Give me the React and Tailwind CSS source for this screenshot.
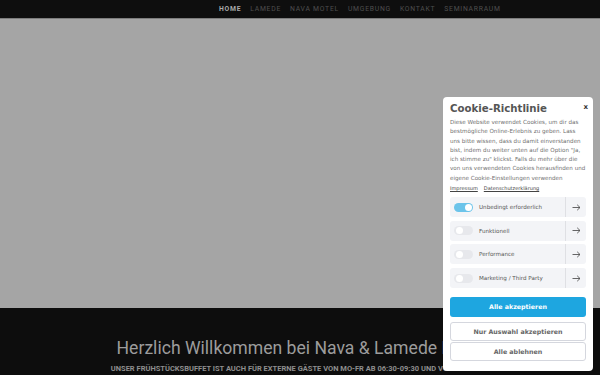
import React from 'react';

const navItems = ['HOME', 'LAMEDE', 'NAVA MOTEL', 'UMGEBUNG', 'KONTAKT', 'SEMINARRAUM'];

const categories = [
    { label: 'Unbedingt erforderlich', on: true },
    { label: 'Funktionell', on: false },
    { label: 'Performance', on: false },
    { label: 'Marketing / Third Party', on: false },
];

const Arrow = () => (
    <svg width="9" height="7" viewBox="0 0 9 7" fill="none" stroke="#555" strokeWidth="0.9">
        <path d="M0.5 3.5H8M5.2 0.8L8 3.5L5.2 6.2" />
    </svg>
);

const CookieBox = () => (
    <div className="absolute left-[443px] top-[97px] w-[150px] h-[274px] bg-white rounded-[4px] px-[7px] pt-[4px] font-['DejaVu_Sans',sans-serif]">
        <div className="flex items-start justify-between">
            <h2 className="text-[10.2px] leading-[16px] font-bold text-[#555]">Cookie-Richtlinie</h2>
            <span className="text-[7px] leading-[10px] font-bold text-[#333] mr-[-2px] mt-[1px]">x</span>
        </div>
        <p className="mt-[1px] text-[5.6px] leading-[9.3px] text-[#6f6f6f]">
            Diese Website verwendet Cookies, um dir das bestmögliche Online-Erlebnis zu geben. Lass uns bitte wissen, dass du damit einverstanden bist, indem du weiter unten auf die Option "Ja, ich stimme zu" klickst. Falls du mehr über die von uns verwendeten Cookies herausfinden und eigene Cookie-Einstellungen verwenden
        </p>
        <div className="mt-[1px] flex gap-[6px] text-[5px] leading-[8px] text-[#444] underline">
            <span>Impressum</span>
            <span>Datenschutzerklärung</span>
        </div>
        <div className="mt-[5px] flex flex-col gap-[3.7px]">
            {categories.map((c) => (
                <div key={c.label} className="h-[20px] bg-[#f3f4f7] rounded-[3px] flex items-center">
                    <div className="flex-1 flex items-center pl-[4px]">
                        <div className={`w-[19px] h-[9px] rounded-full flex items-center px-[1.5px] ${c.on ? 'bg-[#6cc4ea] justify-end' : 'bg-[#e7e8ec] justify-start'}`}>
                            <div className="w-[7px] h-[7px] rounded-full bg-white" />
                        </div>
                        <span className="ml-[6px] text-[5.6px] text-[#555]">{c.label}</span>
                    </div>
                    <div className="w-[21px] h-full border-l border-[#dfe0e4] flex items-center justify-center">
                        <Arrow />
                    </div>
                </div>
            ))}
        </div>
        <div className="mt-[9px] flex flex-col">
            <button className="block w-full h-[20px] rounded-[3px] bg-[#1ea6e0] text-white text-[6.3px] font-bold">Alle akzeptieren</button>
            <button className="block mt-[5px] w-full h-[19px] rounded-[3px] border border-[#d5d7de] bg-white text-[#666] text-[6.3px] font-bold">Nur Auswahl akzeptieren</button>
            <button className="block mt-[1px] w-full h-[19px] rounded-[3px] border border-[#d5d7de] bg-white text-[#666] text-[6.3px] font-bold">Alle ablehnen</button>
        </div>
    </div>
);

export default function App() {
    return (
        <div className="relative w-[600px] h-[375px] overflow-hidden bg-[#0d0d0d] font-['Roboto',sans-serif]">
            <nav className="h-[18px] bg-[#0e0e0e] flex items-center pl-[219px] gap-[9px] text-[6.8px] tracking-[0.75px]">
                {navItems.map((item, i) => (
                    <span key={item} className={i === 0 ? 'text-[#a9a9a9] font-bold' : 'text-[#4f4f4f]'}>{item}</span>
                ))}
            </nav>
            <div className="h-[290px] bg-[#a5a5a5] border-t border-[#7d7d7d]" />
            <div className="flex flex-col items-center pt-[29px] whitespace-nowrap">
                <h1 className="text-[17.6px] leading-[22px] text-[#9c9c9c]">Herzlich Willkommen bei Nava &amp; Lamede Hotel</h1>
                <p className="mt-[5px] text-[7.5px] leading-[9px] font-bold text-[#8e8e8e]">UNSER FRÜHSTÜCKSBUFFET IST AUCH FÜR EXTERNE GÄSTE VON MO-FR AB 06:30-09:30 UND VON SA-SO AB</p>
            </div>
            <CookieBox />
        </div>
    );
}
